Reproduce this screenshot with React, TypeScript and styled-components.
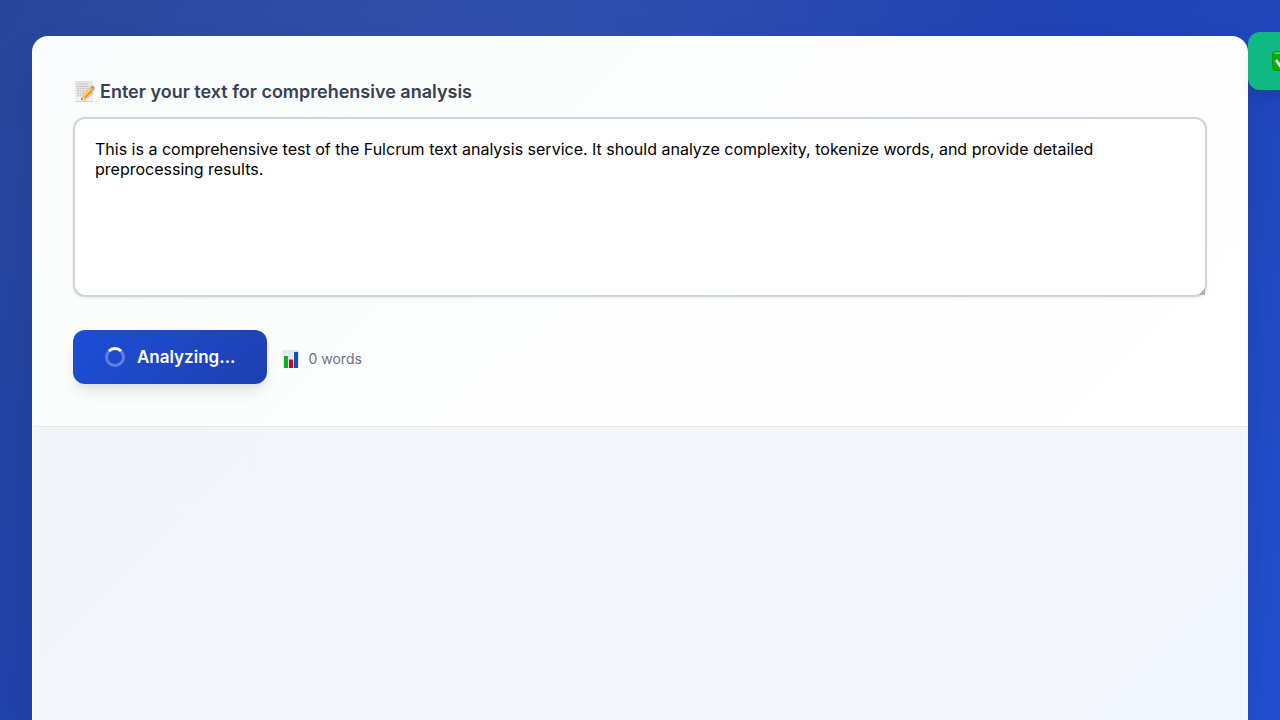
import React, { useState } from "react";
import styled, { createGlobalStyle } from "styled-components";

const GlobalStyle = createGlobalStyle`
  *, *::before, *::after { box-sizing: border-box; }
  body {
    margin: 0;
    overflow-x: hidden;
    font-family: Inter, sans-serif;
    color: #374151;
  }
`;

const Page = styled.div`
  display: flex;
  min-height: 100vh;
  padding: 36px 32px 0;
  background:
    radial-gradient(circle at 40% 20%, rgba(255, 255, 255, 0.08), transparent 60%),
    linear-gradient(135deg, #26459a 0%, #1f42b2 50%, #2350d2 100%);
`;

const Card = styled.main`
  flex: 1;
  display: flex;
  flex-direction: column;
  min-width: 0;
  overflow: hidden;
  border: 1px solid rgba(255, 255, 255, 0.9);
  border-bottom: 0;
  border-radius: 16px 16px 0 0;
  background: #f4f6fb;
  box-shadow: 0 20px 40px rgba(0, 0, 0, 0.1);
`;

const Form = styled.form`
  display: flex;
  flex-direction: column;
  padding: 40px 40px 42px;
  border-bottom: 1px solid #e5e7eb;
  background: linear-gradient(135deg, #fafbfc 0%, #fcfdfd 45%, #ffffff 100%);
`;

const Label = styled.label`
  display: flex;
  align-items: center;
  gap: 5px;
  margin-bottom: 10px;
  font-size: 18px;
  font-weight: 600;
  line-height: 30px;
`;

const TextArea = styled.textarea`
  height: 180px;
  padding: 20px;
  border: 2px solid #d1d5db;
  border-radius: 12px;
  outline: none;
  background: #ffffff;
  box-shadow: 0 1px 3px rgba(0, 0, 0, 0.08);
  color: #000000;
  font-family: inherit;
  font-size: 16px;
  line-height: 20px;
  resize: vertical;

  &::-webkit-resizer {
    background: linear-gradient(135deg, transparent 78%, #b0b0b0 78%);
  }
`;

const Actions = styled.div`
  display: flex;
  align-items: center;
  gap: 15px;
  margin-top: 33px;
`;

const SubmitButton = styled.button`
  display: inline-flex;
  align-items: center;
  gap: 12px;
  height: 54px;
  padding: 0 31px 0 32px;
  border: 0;
  border-radius: 12px;
  background: linear-gradient(135deg, #1d4ed8 0%, #1e40af 100%);
  box-shadow: 0 10px 15px -3px rgba(0, 0, 0, 0.1), 0 4px 6px -2px rgba(0, 0, 0, 0.05);
  color: #ffffff;
  font-family: inherit;
  font-size: 17px;
  font-weight: 600;
  line-height: 22px;
`;

const Spinner = styled.span`
  width: 20px;
  height: 20px;
  border: 3px solid rgba(255, 255, 255, 0.3);
  border-top-color: #ffffff;
  border-radius: 50%;
`;

const WordCount = styled.output`
  display: flex;
  align-items: center;
  gap: 9px;
  padding-top: 4px;
  color: #6b7280;
  font-size: 14px;
  line-height: 20px;
`;

const Results = styled.section`
  flex: 1;
  min-height: 293px;
  background: linear-gradient(135deg, #f3f5fa 0%, #f4f6fb 82%, #f2f6ff 90%, #f2f6ff 100%);
`;

const Toast = styled.div`
  position: fixed;
  top: 32px;
  left: calc(100% - 32px);
  display: flex;
  align-items: center;
  height: 58px;
  padding: 0 24px;
  border-radius: 12px;
  background: #10b981;
  box-shadow: 0 10px 15px -3px rgba(0, 0, 0, 0.1), 0 4px 6px -2px rgba(0, 0, 0, 0.05);
`;

function MemoIcon() {
  return (
    <svg width="22" height="22" viewBox="0 0 22 22" aria-hidden="true">
      <defs>
        <linearGradient id="memo-paper" x1="0" y1="0" x2="0" y2="1">
          <stop offset="0" stopColor="#e2e2e2" />
          <stop offset="1" stopColor="#f3f3f3" />
        </linearGradient>
      </defs>
      <rect x="2" y="0" width="18" height="21" fill="url(#memo-paper)" />
      <path d="M2 20.5h18" stroke="#d2d2d2" />
      <g stroke="#b0b0b0" strokeWidth="0.8" strokeDasharray="2.2 0.7 1.2 0.5">
        <path d="M6 3h9M4 5.5h12M4 7.8h13M4 10.1h9M4 12.4h7M4 14.7h5" />
      </g>
      <path d="M9.5 19.8l10-9 1 2-9 7z" fill="#777" opacity="0.35" />
      <path d="M8 18.8l1.5-4.8 8-8 3.4 3.2-8.4 8.3z" fill="#f6b72c" />
      <path d="M10 14.5l8-8 1.1 1-8.2 8.2z" fill="#ffd966" />
      <path d="M12.1 17.1l8.4-8.2-1.1-1-8.3 8.3z" fill="#e09a1c" />
      <path d="M8 18.8l1.5-4.8 3 3.5z" fill="#eccb9b" />
      <path d="M8 18.8l.6-1.8 1.2 1.2z" fill="#333" />
      <path d="M16.5 7l1-1 3.4 3.2-1 1z" fill="#b9bec4" />
      <path d="M17.5 6l1-1c1.5-.8 3.7 1 3 2.6l-.6 1.6z" fill="#e8827c" />
    </svg>
  );
}

function ChartIcon() {
  return (
    <svg width="18" height="18" viewBox="0 0 18 18" aria-hidden="true">
      <rect x="1" width="16" height="18" fill="#dce6ef" />
      <path d="M1 4.5h16M1 9h16M1 13.5h16M5.5 0v18M11 0v18" stroke="#f3f7fa" strokeWidth="0.6" />
      <rect x="2" y="6" width="4" height="12" fill="#08b51d" />
      <rect x="7" y="9.5" width="4" height="8.5" fill="#c70b20" />
      <rect x="12" y="2" width="4" height="16" fill="#0b53b8" />
    </svg>
  );
}

function CheckIcon() {
  return (
    <svg width="20" height="20" viewBox="0 0 20 20" aria-label="Success" role="img">
      <rect x="0.5" y="0.5" width="19" height="19" rx="3" fill="#04af0b" stroke="#078c15" />
      <path d="M3 2h14" stroke="#65d968" strokeWidth="1.6" strokeLinecap="round" />
      <path d="M4 9l4.5 6.5L16 4" fill="none" stroke="#fff" strokeWidth="2.6" />
    </svg>
  );
}

export default function App() {
  const [text, setText] = useState(
    "This is a comprehensive test of the Fulcrum text analysis service. It should analyze complexity, tokenize words, and provide detailed preprocessing results."
  );

  return (
    <>
      <GlobalStyle />
      <Page>
        <Card>
          <Form onSubmit={(event) => event.preventDefault()}>
            <Label htmlFor="analysis-text">
              <MemoIcon />
              Enter your text for comprehensive analysis
            </Label>
            <TextArea
              id="analysis-text"
              spellCheck={false}
              value={text}
              onChange={(event) => setText(event.target.value)}
            />
            <Actions>
              <SubmitButton type="submit">
                <Spinner aria-hidden="true" />
                Analyzing...
              </SubmitButton>
              <WordCount htmlFor="analysis-text">
                <ChartIcon />
                0 words
              </WordCount>
            </Actions>
          </Form>
          <Results aria-label="Analysis results" />
        </Card>
      </Page>
      <Toast role="status">
        <CheckIcon />
      </Toast>
    </>
  );
}
